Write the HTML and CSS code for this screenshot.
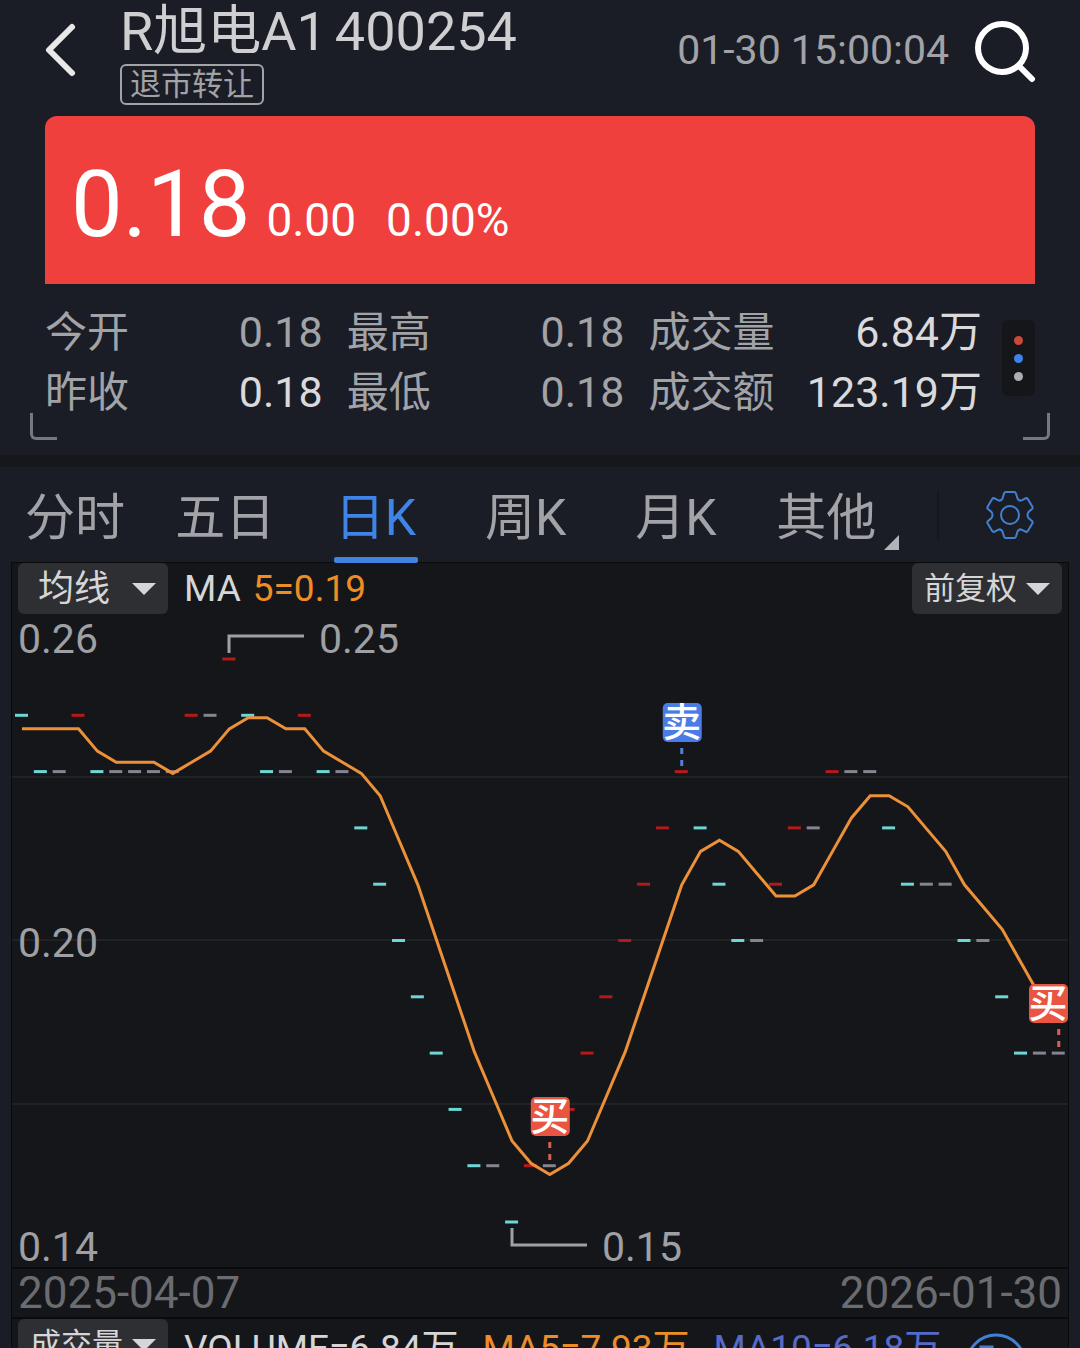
FILE: index.html
```html
<!DOCTYPE html>
<html lang="zh-CN">
<head>
  <meta charset="UTF-8" />
  <meta name="viewport" content="width=device-width, initial-scale=1.0" />
  <title>R旭电A1 400254</title>
  <link rel="stylesheet" href="styles.css">
</head>
<body>
  <div class="app">
    <header class="header">
      <button type="button" class="icon-btn" aria-label="返回">
        <svg class="back-icon" viewBox="0 0 32 56"><path d="M27 5 L4 28 L27 51" /></svg>
      </button>
      <div class="stock">
        <h1 class="stock-title"><span>R旭电A1</span><span>400254</span></h1>
        <span class="stock-tag">退市转让</span>
      </div>
      <time class="quote-time">01-30 15:00:04</time>
      <button type="button" class="icon-btn" aria-label="搜索">
        <svg class="search-icon" viewBox="0 0 60 60">
          <circle cx="27" cy="28" r="24" />
          <path d="M44 46 L57 59" />
        </svg>
      </button>
    </header>

    <section class="price-card">
      <span class="price">0.18</span>
      <span class="change">0.00</span>
      <span class="change percent">0.00%</span>
    </section>

    <section class="stats">
      <div class="stats-grid">
        <div class="stat"><span>今开</span><span class="num">0.18</span></div>
        <div class="stat"><span>最高</span><span class="num">0.18</span></div>
        <div class="stat"><span>成交量</span><span class="num bright">6.84万</span></div>
        <div class="stat"><span>昨收</span><span class="num bright">0.18</span></div>
        <div class="stat"><span>最低</span><span class="num">0.18</span></div>
        <div class="stat"><span>成交额</span><span class="num bright">123.19万</span></div>
      </div>
      <button type="button" class="more-btn" aria-label="更多">
        <i class="dot red"></i><i class="dot blue"></i><i class="dot grey"></i>
      </button>
    </section>

    <nav class="tabs">
      <a href="#" class="tab">分时</a>
      <a href="#" class="tab">五日</a>
      <a href="#" class="tab active">日K</a>
      <a href="#" class="tab">周K</a>
      <a href="#" class="tab">月K</a>
      <a href="#" class="tab more">其他</a>
      <button type="button" class="icon-btn settings" aria-label="设置">
        <svg class="gear-icon" viewBox="-25 -25 50 50">
          <path d="M-4 -23 L4 -23 Q5.5 -23 6 -21.5 L7.5 -16.5 Q9 -13.5 12 -14.8 L15.5 -16.7 Q17 -17.3 17.8 -16 L22.3 -8.5 Q23.2 -7 22 -6 L18.5 -3 Q16.5 0 18.5 3 L22 6 Q23.2 7 22.3 8.5 L17.8 16 Q17 17.3 15.5 16.7 L12 14.8 Q9 13.5 7.5 16.5 L6 21.5 Q5.5 23 4 23 L-4 23 Q-5.5 23 -6 21.5 L-7.5 16.5 Q-9 13.5 -12 14.8 L-15.5 16.7 Q-17 17.3 -17.8 16 L-22.3 8.5 Q-23.2 7 -22 6 L-18.5 3 Q-16.5 0 -18.5 -3 L-22 -6 Q-23.2 -7 -22.3 -8.5 L-17.8 -16 Q-17 -17.3 -15.5 -16.7 L-12 -14.8 Q-9 -13.5 -7.5 -16.5 L-6 -21.5 Q-5.5 -23 -4 -23 Z" />
          <circle r="9" />
        </svg>
      </button>
    </nav>

    <main class="chart">
      <div class="toolbar">
        <label class="picker">
          <select aria-label="指标">
            <option>均线</option>
          </select>
        </label>
        <span class="legend">MA</span>
        <span class="legend orange">5=0.19</span>
        <label class="picker adjust">
          <select aria-label="复权">
            <option>前复权</option>
          </select>
        </label>
      </div>
      <svg class="plot" id="plot" viewBox="0 0 1056 653"></svg>
      <div class="dates"><span>2025-04-07</span><span>2026-01-30</span></div>
      <div class="toolbar">
        <label class="picker volume">
          <select aria-label="副图">
            <option>成交量</option>
          </select>
        </label>
        <span class="legend">VOLUME=6.84万</span>
        <span class="legend orange">MA5=7.93万</span>
        <span class="legend violet">MA10=6.18万</span>
        <button type="button" class="icon-btn round" aria-label="详情">
          <svg class="round-icon" viewBox="0 0 62 62">
            <circle cx="31" cy="31" r="29" />
            <path d="M16 14 H27 V48 H16 Z" />
          </svg>
        </button>
      </div>
    </main>
  </div>

  <script src="script.js"></script>
</body>
</html>
```
FILE: styles.css
```css
* {
  box-sizing: border-box;
}

body {
  margin: 0;
  background-color: #1b1d26;
  color: #a2a3a7;
  font-family: Roboto, 'Noto Sans CJK SC', sans-serif;
}

.app {
  height: 100vh;
  overflow: hidden;
}

.icon-btn {
  display: flex;
  padding: 0;
  border: none;
  background: none;
  cursor: pointer;
}

svg {
  display: block;
  overflow: visible;
  fill: none;
}

/* Header */
.header {
  display: flex;
  align-items: center;
  height: 116px;
  padding: 0 45px 16px 45px;
}

.back-icon {
  width: 32px;
  height: 56px;
  stroke: #e8e8e8;
  stroke-width: 6;
  stroke-linecap: round;
  stroke-linejoin: round;
}

.stock {
  display: flex;
  flex-direction: column;
  align-items: flex-start;
  margin: 4px auto 0 43px;
}

.stock-title {
  display: flex;
  gap: 8px;
  margin: 0;
  font-size: 54px;
  font-weight: 400;
  line-height: 64px;
  color: #cfcfd1;
}

.stock-tag {
  padding: 0 8px;
  border: 2px solid #a2a3a7;
  border-radius: 6px;
  font-size: 31px;
  line-height: 37px;
}

.quote-time {
  margin-right: 26px;
  font-size: 41px;
}

.search-icon {
  width: 60px;
  height: 60px;
  stroke: #fff;
  stroke-width: 6;
  stroke-linecap: round;
}

/* Price card */
.price-card {
  display: flex;
  align-items: baseline;
  height: 168px;
  margin: 0 45px;
  padding: 33px 26px;
  border-radius: 12px 12px 0 0;
  background-color: #ef403d;
  color: #fff;
}

.price {
  font-size: 92px;
  line-height: 112px;
}

.change {
  margin-left: 16px;
  font-size: 46px;
}

.percent {
  margin-left: 30px;
}

/* Open / high / low / volume */
.stats {
  position: relative;
  display: flex;
  align-items: flex-start;
  gap: 20px;
  padding: 18px 45px 33px;
  border-bottom: 12px solid #16171b;
}

.stats::before,
.stats::after {
  content: '';
  position: absolute;
  bottom: 15px;
  width: 24px;
  height: 24px;
  border-bottom: 3px solid #77787d;
}

.stats::before {
  left: 30px;
  border-left: 3px solid #77787d;
  border-bottom-left-radius: 6px;
}

.stats::after {
  right: 30px;
  border-right: 3px solid #77787d;
  border-bottom-right-radius: 6px;
}

.stats-grid {
  flex: 1;
  display: grid;
  grid-template-columns: 278fr 278fr 334fr;
  column-gap: 24px;
}

.stat {
  display: flex;
  align-items: baseline;
  justify-content: space-between;
  height: 60px;
  font-size: 42px;
  line-height: 60px;
  white-space: nowrap;
}

.num {
  font-size: 43px;
}

.bright {
  color: #dadadc;
}

.more-btn {
  display: flex;
  flex-direction: column;
  align-items: center;
  justify-content: center;
  gap: 9px;
  width: 33px;
  height: 76px;
  margin-top: 18px;
  padding: 0;
  border: none;
  border-radius: 6px;
  background-color: #15161a;
}

.dot {
  width: 9px;
  height: 9px;
  border-radius: 50%;
}

.dot.red {
  background-color: #c94a38;
}

.dot.blue {
  background-color: #3f83ea;
}

.dot.grey {
  background-color: #adaeb2;
}

/* Period tabs */
.tabs {
  display: flex;
  height: 96px;
}

.tab {
  flex: 301;
  position: relative;
  height: 96px;
  font-size: 50px;
  line-height: 102px;
  text-align: center;
  color: #a2a3a7;
  text-decoration: none;
}

.tab.active {
  color: #4084e8;
}

.tab.active::after {
  content: '';
  position: absolute;
  left: 50%;
  bottom: 0;
  width: 84px;
  height: 6px;
  margin-left: -42px;
  border-radius: 2px;
  background-color: #4084e0;
}

.tab.more::after {
  content: '';
  position: absolute;
  right: 2px;
  bottom: 13px;
  border-left: 15px solid transparent;
  border-bottom: 15px solid #b2b3b6;
}

.settings {
  flex: 282;
  align-items: center;
  justify-content: center;
  margin: 24px 0 24px 36px;
  border-left: 2px solid #15161b;
}

.gear-icon {
  width: 50px;
  height: 50px;
  stroke: #4280d2;
  stroke-width: 2;
}

/* Chart */
.chart {
  margin: 0 12px;
  outline: 1px solid #090a0d;
  background-color: #15161a;
}

.toolbar {
  display: flex;
  align-items: center;
  height: 51px;
  padding: 0 6px;
}

.picker {
  position: relative;
  margin-right: 16px;
}

.picker::after {
  content: '';
  position: absolute;
  top: 20px;
  right: 12px;
  border: 12px solid transparent;
  border-top-color: #d6d6d8;
  border-bottom: none;
  pointer-events: none;
}

.picker select {
  display: block;
  width: 150px;
  height: 51px;
  padding: 0 0 0 20px;
  border: none;
  border-radius: 6px;
  appearance: none;
  background-color: #2e2f33;
  color: #d6d6d8;
  font-family: inherit;
  font-size: 36px;
}

.picker.adjust {
  margin: 0 0 0 auto;
}

.picker.adjust select,
.picker.volume select {
  padding-left: 12px;
  font-size: 31px;
}

.legend {
  margin-right: 12px;
  font-size: 37px;
  color: #d6d6d8;
  white-space: nowrap;
}

.volume ~ .legend {
  margin-right: 24px;
}

.legend.orange {
  color: #ee8d26;
}

.legend.violet {
  color: #566ac8;
}

.round {
  align-self: flex-start;
  margin-top: 14px;
}

.round-icon {
  width: 62px;
  height: 62px;
  stroke: #4280d2;
  stroke-width: 3;
}

.dates {
  display: flex;
  justify-content: space-between;
  padding: 0 6px;
  border-top: 2px solid #090a0d;
  border-bottom: 2px solid #090a0d;
  font-size: 44px;
  line-height: 48px;
  color: #6b6c70;
}

.plot {
  width: 100%;
  font-size: 41px;
}

.plot text {
  fill: #9fa0a3;
}

.grid-line {
  stroke: #212226;
  stroke-width: 2;
}

.up {
  stroke: #b5191b;
}

.down {
  stroke: #6fd6d6;
}

.flat {
  stroke: #858591;
}

.up,
.down,
.flat,
.ma-line,
.pointer,
.leader {
  stroke-width: 3;
}

.ma-line {
  stroke: #ec9138;
}

.pointer {
  stroke: #9fa0a3;
}

.leader {
  stroke-dasharray: 6 6;
}

.leader.buy {
  stroke: #d8604f;
}

.leader.sell {
  stroke: #5580d6;
}

.badge.buy {
  fill: #ea5541;
}

.badge.sell {
  fill: #4a7ce8;
}

.plot .badge-text {
  fill: #fff;
  font-size: 39px;
  font-weight: 500;
  text-anchor: middle;
}
```
FILE: script.js
```js
const plot = document.getElementById('plot');

// Daily closing price, in cents
const closes = [
  24, 23, 23, 24, 23, 23, 23, 23, 23, 24, 24, 25, 24, 23, 23, 24, 23, 23, 22,
  21, 20, 19, 18, 17, 16, 16, 15, 16, 16, 17, 18, 19, 20, 21, 22, 23, 22, 21,
  20, 20, 21, 22, 22, 23, 23, 23, 22, 21, 21, 21, 20, 20, 19, 18, 18, 18
];

const x = i => 10 + i * 18.85;
const y = price => 45 + (25 - price) * 56.3;
const maY = price => 48 + (25 - price) * 55.7;

function add(tag, attrs, text) {
  const el = document.createElementNS('http://www.w3.org/2000/svg', tag);
  for (const name in attrs) el.setAttribute(name, attrs[name]);
  if (text) el.textContent = text;
  plot.appendChild(el);
}

// Grid and axis labels
[163, 326, 490].forEach(pos => add('path', { class: 'grid-line', d: `M0 ${pos} H1056` }));
add('text', { x: 6, y: 39 }, '0.26');
add('text', { x: 6, y: 343 }, '0.20');
add('text', { x: 6, y: 647 }, '0.14');

// Each day opens and closes on one price, so it is a flat dash
closes.forEach((close, i) => {
  const prev = i ? closes[i - 1] : 25;
  const type = close > prev ? 'up' : close < prev ? 'down' : 'flat';
  add('path', { class: type, d: `M${x(i) - 7} ${y(close)} h13` });
});

// MA5
const ma = closes.map((close, i) => {
  if (i < 4) return 23.8;
  return closes.slice(i - 4, i + 1).reduce((a, b) => a + b) / 5;
});
add('polyline', {
  class: 'ma-line',
  points: ma.map((value, i) => `${x(i)},${maY(value)}`).join(' ')
});

// High and low
add('path', { class: 'pointer', d: 'M217 39 V22 H292' });
add('text', { x: 307, y: 39 }, '0.25');
add('path', { class: 'pointer', d: 'M500 614 V631 H575' });
add('text', { x: 590, y: 647 }, '0.15');

// Trades
[
  { type: 'sell', label: '卖', day: 35, top: 89 },
  { type: 'buy', label: '买', day: 28, top: 483 },
  { type: 'buy', label: '买', day: 55, top: 370 }
].forEach(({ type, label, day, top }) => {
  const center = Math.min(x(day), 1036);
  add('rect', { class: `badge ${type}`, x: center - 19, y: top, width: 39, height: 39, rx: 5 });
  add('text', { class: 'badge-text', x: center, y: top + 33 }, label);
  add('path', { class: `leader ${type}`, d: `M${x(day)} ${top + 45} v18` });
});
```
